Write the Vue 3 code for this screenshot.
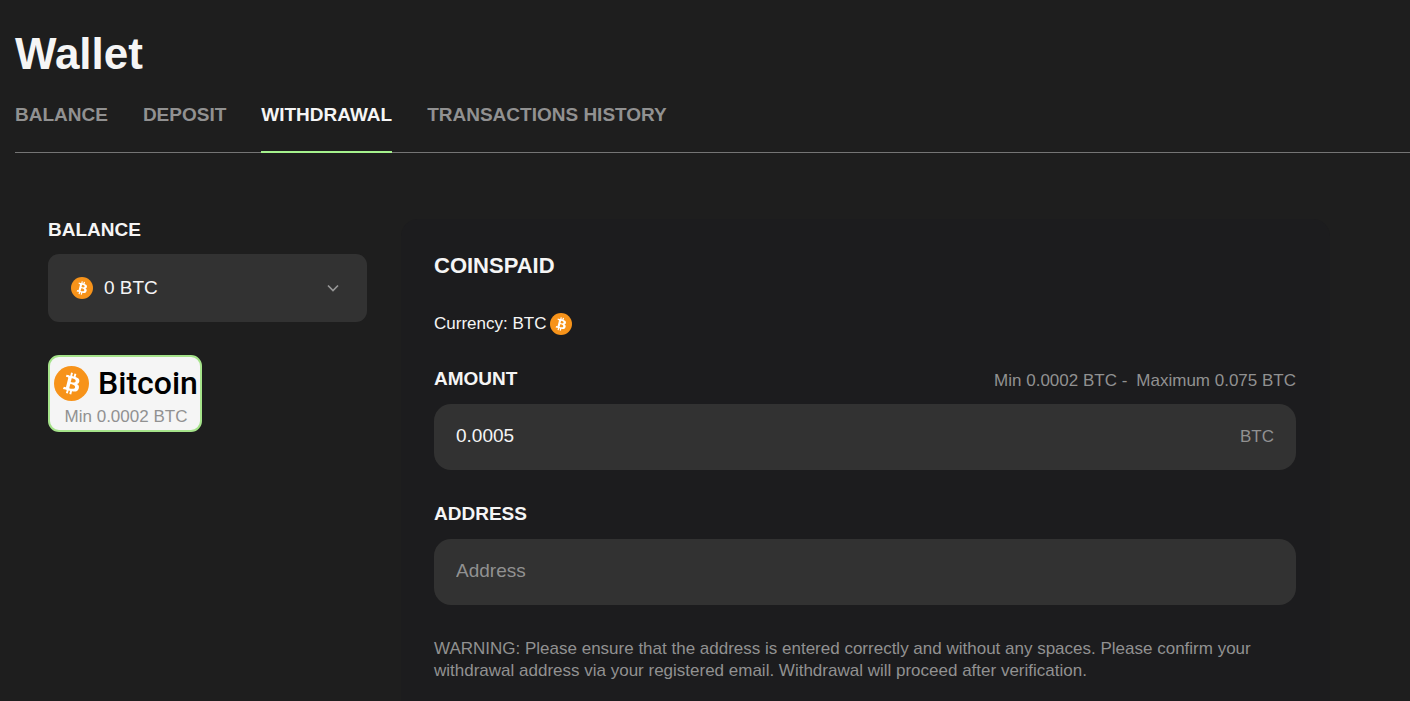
<template>
  <div class="wallet">
    <h1 class="title">Wallet</h1>

    <nav class="tabs">
      <a
        v-for="tab in tabs"
        :key="tab.id"
        :href="'#' + tab.id"
        class="tab"
        :class="{ active: tab.id === activeTab }"
        @click.prevent="activeTab = tab.id"
      >{{ tab.label }}</a>
    </nav>

    <div class="content">
      <aside class="sidebar">
        <label class="label" for="balance">BALANCE</label>
        <div class="balance-box">
          <svg class="coin" viewBox="0 0 32 32" aria-hidden="true">
            <circle cx="16" cy="16" r="16" fill="#f7931a" />
            <path :d="coinPath" fill="#fff" />
          </svg>
          <select id="balance" v-model="balance" class="balance-select">
            <option value="BTC">0 BTC</option>
          </select>
          <svg class="chevron" viewBox="0 0 12 8" aria-hidden="true">
            <path d="M1 1.5l5 5 5-5" fill="none" stroke="#979797" stroke-width="1.7" />
          </svg>
        </div>

        <button type="button" class="method">
          <span class="method-logo">
            <svg class="method-coin" viewBox="0 0 32 32" aria-hidden="true">
              <circle cx="16" cy="16" r="16" fill="#f7931a" />
              <path :d="coinPath" fill="#fff" />
            </svg>
            <span class="method-name">Bitcoin</span>
          </span>
          <span class="method-min">Min 0.0002 BTC</span>
        </button>
      </aside>

      <form class="card" @submit.prevent>
        <h2 class="card-title">COINSPAID</h2>

        <p class="currency">
          Currency: BTC
          <svg class="coin" viewBox="0 0 32 32" aria-hidden="true">
            <circle cx="16" cy="16" r="16" fill="#f7931a" />
            <path :d="coinPath" fill="#fff" />
          </svg>
        </p>

        <div class="field">
          <div class="field-head">
            <label class="label" for="amount">AMOUNT</label>
            <span class="limits"><span>Min 0.0002 BTC -</span><span>Maximum 0.075 BTC</span></span>
          </div>
          <div class="input-box">
            <input id="amount" v-model="amount" type="text" class="input" />
            <span class="unit">BTC</span>
          </div>
        </div>

        <div class="field">
          <div class="field-head">
            <label class="label" for="address">ADDRESS</label>
          </div>
          <div class="input-box">
            <input id="address" v-model="address" type="text" class="input" placeholder="Address" />
          </div>
        </div>

        <p class="warning">
          WARNING: Please ensure that the address is entered correctly and without any spaces. Please confirm your
          withdrawal address via your registered email. Withdrawal will proceed after verification.
        </p>
      </form>
    </div>
  </div>
</template>

<script setup>
import { ref } from 'vue'

const tabs = [
  { id: 'balance', label: 'BALANCE' },
  { id: 'deposit', label: 'DEPOSIT' },
  { id: 'withdrawal', label: 'WITHDRAWAL' },
  { id: 'history', label: 'TRANSACTIONS HISTORY' }
]
const activeTab = ref('withdrawal')

const balance = ref('BTC')
const amount = ref('0.0005')
const address = ref('')

// Bitcoin sign, shared by every coin icon
const coinPath = 'M23.189 14.02c.314-2.096-1.283-3.223-3.465-3.975l.708-2.84-1.728-.43-.69 2.765c-.454-.114-.92-.22-1.385-.326l.695-2.783L15.596 6l-.708 2.839c-.376-.086-.746-.17-1.104-.26l.002-.009-2.384-.595-.46 1.846s1.283.294 1.256.312c.7.175.826.638.805 1.006l-.806 3.235c.048.012.11.03.18.057l-.183-.045-1.13 4.532c-.086.212-.303.531-.793.41.018.025-1.256-.313-1.256-.313l-.858 1.978 2.25.561c.418.105.828.215 1.231.318l-.715 2.872 1.727.43.708-2.84c.472.127.93.245 1.378.357l-.706 2.828 1.728.43.715-2.866c2.948.558 5.164.333 6.097-2.333.752-2.146-.037-3.385-1.588-4.192 1.13-.26 1.98-1.003 2.207-2.538zm-3.95 5.538c-.533 2.147-4.148.986-5.32.695l.95-3.805c1.172.293 4.929.872 4.37 3.11zm.535-5.569c-.487 1.953-3.495.96-4.47.717l.86-3.45c.975.243 4.118.696 3.61 2.733z'
</script>

<style>
body {
  background: #1e1e1e;
}
</style>

<style scoped>
.wallet {
  box-sizing: border-box;
  display: flex;
  flex-direction: column;
  min-height: 100vh;
  padding: 29px 0 0 15px;
  font-family: Arial, 'Liberation Sans', sans-serif;
  font-size: 17px;
  line-height: 22px;
  color: #f5f5f5;
}

.title {
  margin: 0;
  font-size: 44px;
  line-height: 50px;
}

.tabs {
  display: flex;
  gap: 35px;
  border-bottom: 1px solid #757575;
}

.tab {
  padding: 25px 0;
  margin-bottom: -1px;
  border-bottom: 2px solid transparent;
  font-size: 19px;
  font-weight: bold;
  color: #919191;
  text-decoration: none;
}

.tab.active {
  color: #f5f5f5;
  border-bottom-color: #a5f28d;
}

.content {
  display: flex;
  flex: 1;
  gap: 34px;
  padding: 66px 80px 0 33px;
}

.sidebar {
  width: 319px;
  flex-shrink: 0;
}

.label {
  display: block;
  font-size: 19px;
  font-weight: bold;
}

.balance-box {
  display: flex;
  align-items: center;
  height: 68px;
  margin: 13px 0 33px;
  padding: 0 28px 0 23px;
  box-sizing: border-box;
  background: #323232;
  border-radius: 11px;
}

.coin {
  width: 22px;
  height: 22px;
}

.balance-select {
  flex: 1;
  appearance: none;
  margin: 0 0 0 11px;
  padding: 0 0 2px;
  border: 0;
  outline: none;
  background: transparent;
  color: #f5f5f5;
  font-family: inherit;
  font-size: 19px;
}

.chevron {
  width: 12px;
  height: 8px;
}

.method {
  display: flex;
  flex-direction: column;
  align-items: center;
  width: 154px;
  padding: 8px 2px 2px 4px;
  border: 2px solid #a5e38a;
  border-radius: 11px;
  background: #f5f5f5;
  font-family: inherit;
  cursor: pointer;
}

.method-logo {
  display: flex;
  align-items: center;
  gap: 9px;
}

.method-coin {
  width: 35px;
  height: 35px;
}

.method-name {
  font-family: Roboto, sans-serif;
  font-size: 32px;
  font-weight: 500;
  line-height: 36px;
  color: #000;
}

.method-min {
  margin-top: 5px;
  font-size: 17px;
  line-height: 22px;
  color: #919191;
}

.card {
  flex: 1;
  padding: 34px 34px 18px 33px;
  background: #1c1c1e;
  border-radius: 17px 17px 0 0;
}

.card-title {
  margin: 0 0 34px;
  font-size: 22px;
  line-height: 26px;
}

.currency {
  display: flex;
  align-items: center;
  gap: 4px;
  margin: 0 0 33px;
}

.field {
  margin-bottom: 33px;
}

.field-head {
  display: flex;
  justify-content: space-between;
  align-items: flex-end;
  margin-bottom: 14px;
}

.limits {
  display: flex;
  gap: 9px;
  line-height: 18px;
  color: #919191;
}

.input-box {
  display: flex;
  align-items: center;
  height: 66px;
  padding: 0 22px;
  background: #323232;
  border-radius: 17px;
}

.input {
  flex: 1;
  min-width: 0;
  padding: 0 0 2px;
  border: 0;
  outline: none;
  background: transparent;
  color: #f5f5f5;
  font-family: inherit;
  font-size: 19px;
}

.input::placeholder {
  color: #919191;
}

.unit {
  color: #919191;
}

.warning {
  margin: 0;
  color: #919191;
}
</style>
